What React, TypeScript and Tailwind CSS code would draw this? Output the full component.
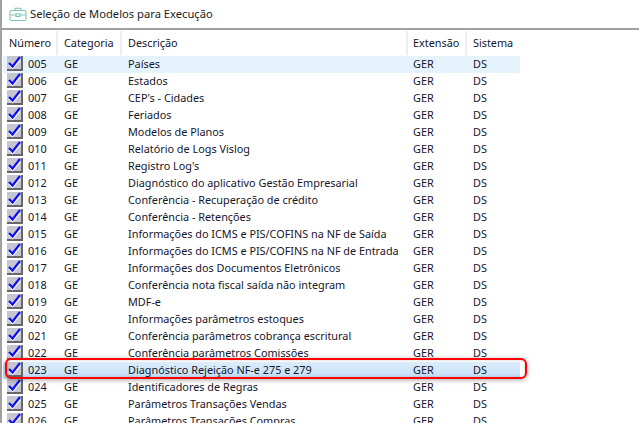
type Row = { num: string; desc: string }

const rows: Row[] = [
  { num: '005', desc: 'Países' },
  { num: '006', desc: 'Estados' },
  { num: '007', desc: "CEP's - Cidades" },
  { num: '008', desc: 'Feriados' },
  { num: '009', desc: 'Modelos de Planos' },
  { num: '010', desc: 'Relatório de Logs Vislog' },
  { num: '011', desc: "Registro Log's" },
  { num: '012', desc: 'Diagnóstico do aplicativo Gestão Empresarial' },
  { num: '013', desc: 'Conferência - Recuperação de crédito' },
  { num: '014', desc: 'Conferência - Retenções' },
  { num: '015', desc: 'Informações do ICMS e PIS/COFINS na NF de Saída' },
  { num: '016', desc: 'Informações do ICMS e PIS/COFINS na NF de Entrada' },
  { num: '017', desc: 'Informações dos Documentos Eletrônicos' },
  { num: '018', desc: 'Conferência nota fiscal saída não integram' },
  { num: '019', desc: 'MDF-e' },
  { num: '020', desc: 'Informações parâmetros estoques' },
  { num: '021', desc: 'Conferência parâmetros cobrança escritural' },
  { num: '022', desc: 'Conferência parâmetros Comissões' },
  { num: '023', desc: 'Diagnóstico Rejeição NF-e 275 e 279' },
  { num: '024', desc: 'Identificadores de Regras' },
  { num: '025', desc: 'Parâmetros Transações Vendas' },
  { num: '026', desc: 'Parâmetros Transações Compras' },
]

function Check() {
  return (
    <div className="relative w-[16px] h-[15px] shrink-0 bg-[#c6c6d0] border-r-2 border-b-2 border-[#666666]">
      <svg viewBox="0 0 16 15" className="absolute left-0 top-0 w-[16px] h-[15px]">
        <path d="M2 8.5 L5.5 12 L13 3.5" fill="none" stroke="#ffffff" strokeWidth="2" />
        <path d="M2 7 L5.5 10.5 L13 1" fill="none" stroke="#1010f0" strokeWidth="2.2" />
      </svg>
    </div>
  )
}

function HeaderCell({ label, className }: { label: string; className: string }) {
  return <div className={`h-[24px] flex items-center border-r-2 border-[#eeeeee] ${className}`}>{label}</div>
}

export default function App() {
  return (
    <div className="relative w-[639px] h-[423px] overflow-hidden bg-white flex font-['Noto_Sans',sans-serif] text-[10.85px] text-[#16162a]">
      <div className="w-[2px] bg-[#a0a0a0]" />
      <div className="flex-1 min-w-0">
        <div className="h-[28px] flex items-center gap-[3px] pl-[7px]">
          <svg viewBox="0 0 18 14" className="w-[18px] h-[14px]" fill="none" stroke="#7fc4b4" strokeWidth="1.1">
            <rect x="1" y="3.5" width="16" height="10" rx="1.5" />
            <path d="M6 3.5V1.2h6v2.3M1 8h6M11 8h6M7 6.8h4v2.6H7z" />
          </svg>
          <span className="text-[11.2px] text-[#222222]">Seleção de Modelos para Execução</span>
        </div>
        <div className="h-[2px] bg-[#a0a0a0]" />
        <div className="flex h-[26px] items-center w-[517px] ml-[1px]">
          <HeaderCell label="Número" className="w-[55px] pl-[6px]" />
          <HeaderCell label="Categoria" className="w-[64px] pl-[6px]" />
          <HeaderCell label="Descrição" className="w-[286px] pl-[6px]" />
          <HeaderCell label="Extensão" className="w-[59px] pl-[5px]" />
          <div className="pl-[6px]">Sistema</div>
        </div>
        {rows.map((r) => (
          <div
            key={r.num}
            className={`flex items-center h-[17px] w-[517px] ml-[1px] ${
              r.num === '023'
                ? 'bg-gradient-to-b from-[#dcedfc] to-[#c2dff8]'
                : r.num === '005'
                  ? 'bg-[#e5f3fd]'
                  : ''
            }`}
          >
            <div className="w-[25px] pl-[4px] mb-[2px]">
              <Check />
            </div>
            <div className="w-[36px]">{r.num}</div>
            <div className="w-[64px]">GE</div>
            <div className="w-[285px] whitespace-nowrap">{r.desc}</div>
            <div className="w-[60px]">GER</div>
            <div>DS</div>
          </div>
        ))}
      </div>
      {/* red highlight drawn over the selected row */}
      <div className="absolute left-[5px] top-[358px] w-[522px] h-[21px] rounded-[6px] border-2 border-[#ff0000] shadow-[0_1px_5px_rgba(0,0,0,0.35),inset_0_0_3px_rgba(0,0,0,0.2)]" />
    </div>
  )
}
